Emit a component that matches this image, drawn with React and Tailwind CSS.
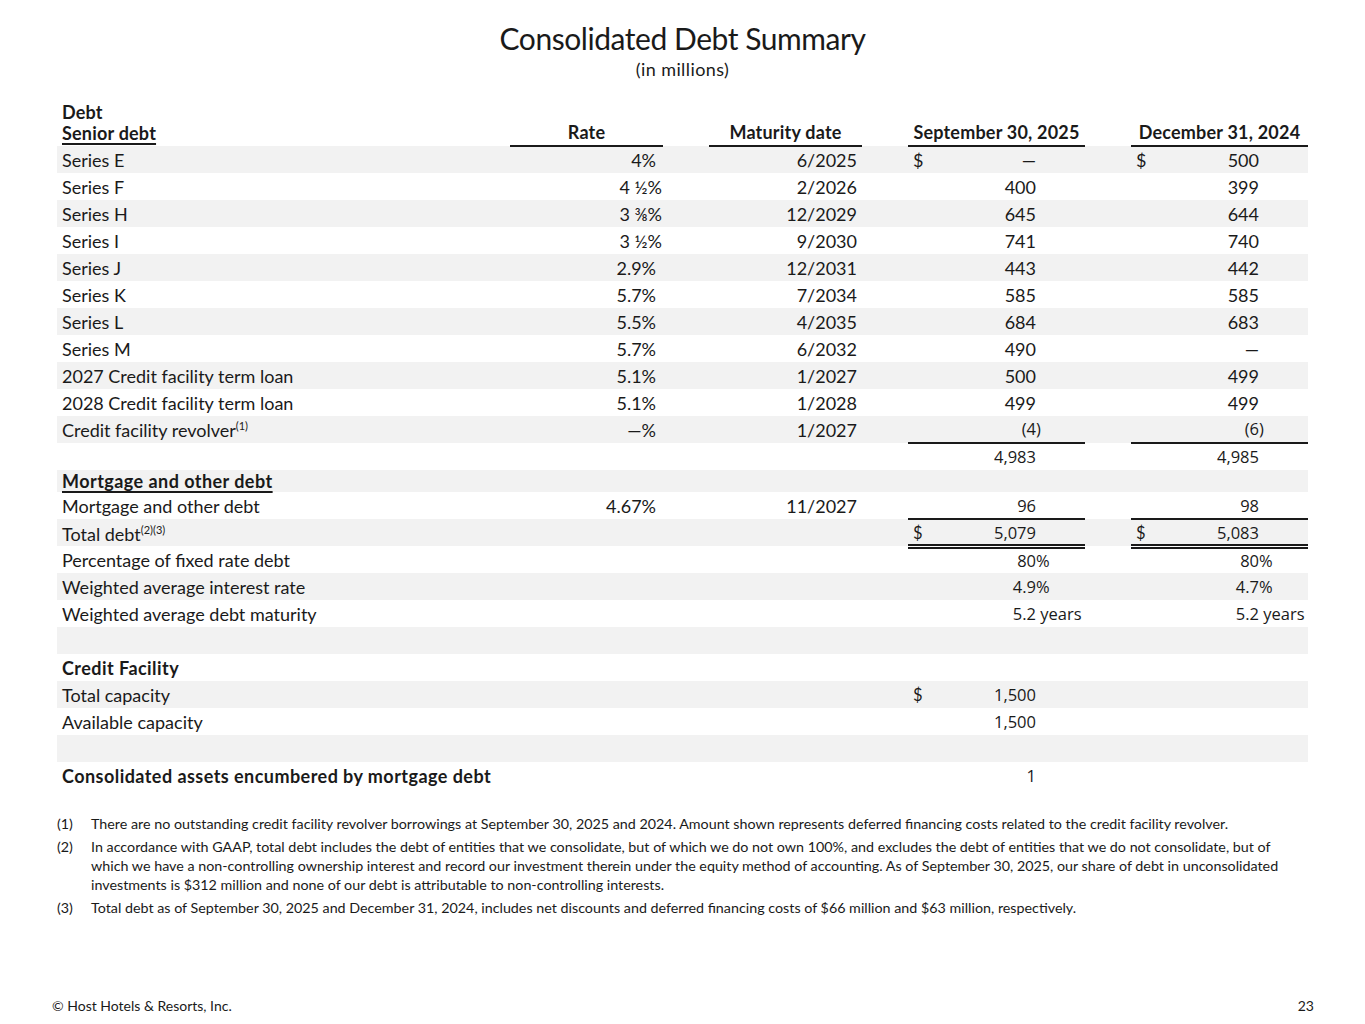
import React from "react";

const LATO = { fontFamily: "Lato, 'Noto Sans', sans-serif" };

function Num({ c, alt }) {
  if (!c) return null;
  return (
    <div
      className="flex items-baseline pl-[5px]"
      style={alt ? { fontFamily: "'Open Sans', 'Noto Sans', sans-serif", fontSize: "16.5px" } : undefined}
    >
      <span className="w-[12px] shrink-0 text-left" style={LATO}>{c.d ? "$" : ""}</span>
      <span className="flex-1 text-right">{c.v}</span>
      <span className="w-[49px] shrink-0 text-left whitespace-pre">{c.s || ""}</span>
    </div>
  );
}

const rows = [
  { label: "Series E", g: 1, rate: "4%", mat: "6/2025", sep: { d: 1, v: "—" }, dec: { d: 1, v: "500" } },
  { label: "Series F", rate: "4 ½%", frac: 1, mat: "2/2026", sep: { v: "400" }, dec: { v: "399" } },
  { label: "Series H", g: 1, rate: "3 ⅜%", frac: 1, mat: "12/2029", sep: { v: "645" }, dec: { v: "644" } },
  { label: "Series I", rate: "3 ½%", frac: 1, mat: "9/2030", sep: { v: "741" }, dec: { v: "740" } },
  { label: "Series J", g: 1, rate: "2.9%", mat: "12/2031", sep: { v: "443" }, dec: { v: "442" } },
  { label: "Series K", rate: "5.7%", mat: "7/2034", sep: { v: "585" }, dec: { v: "585" } },
  { label: "Series L", g: 1, rate: "5.5%", mat: "4/2035", sep: { v: "684" }, dec: { v: "683" } },
  { label: "Series M", rate: "5.7%", mat: "6/2032", sep: { v: "490" }, dec: { v: "—" } },
  { label: "2027 Credit facility term loan", g: 1, rate: "5.1%", mat: "1/2027", sep: { v: "500" }, dec: { v: "499" } },
  { label: "2028 Credit facility term loan", rate: "5.1%", mat: "1/2028", sep: { v: "499" }, dec: { v: "499" } },
  { label: "Credit facility revolver", sup: "(1)", g: 1, rate: "—%", mat: "1/2027", sep: { v: "(4", s: ")" }, dec: { v: "(6", s: ")" }, alt: 1, bb: 1 },
  { label: "", sep: { v: "4,983" }, dec: { v: "4,985" }, alt: 1 },
  { label: "Mortgage and other debt", bold: 1, ul: 1, g: 1, h: 22 },
  { label: "Mortgage and other debt", rate: "4.67%", mat: "11/2027", sep: { v: "96" }, dec: { v: "98" }, alt: 1, bb: 1, pt: "pt-[1px]" },
  { label: "Total debt", sup: "(2)(3)", g: 1, sep: { d: 1, v: "5,079" }, dec: { d: 1, v: "5,083" }, alt: 1, dbl: 1, pt: "pt-[3px] leading-[18px]" },
  { label: "Percentage of fixed rate debt", sep: { v: "80", s: "%" }, dec: { v: "80", s: "%" }, alt: 1 },
  { label: "Weighted average interest rate", g: 1, sep: { v: "4.9", s: "%" }, dec: { v: "4.7", s: "%" }, alt: 1 },
  { label: "Weighted average debt maturity", sep: { v: "5.2", s: " years" }, dec: { v: "5.2", s: " years" }, alt: 1 },
  { label: "", g: 1 },
  { label: "Credit Facility", bold: 1 },
  { label: "Total capacity", g: 1, sep: { d: 1, v: "1,500" }, alt: 1 },
  { label: "Available capacity", sep: { v: "1,500" }, alt: 1 },
  { label: "", g: 1 },
  { label: "Consolidated assets encumbered by mortgage debt", bold: 1, sep: { v: "1" }, alt: 1 },
];

export default function App() {
  return (
    <div
      className="w-[1365px] h-[1024px] bg-white text-[#1a1a1a] flex flex-col relative"
      style={LATO}
    >
      <div className="pt-[19px] text-center">
        <div className="text-[30px] leading-[38px] tracking-[-0.45px]">Consolidated Debt Summary</div>
        <div className="text-[18px] leading-[22px] mt-[1px] tracking-[0.4px]">(in millions)</div>
      </div>

      <div className="pl-[57px] mt-[22px]">
        <table className="table-fixed border-collapse w-[1251px] text-[18px]">
          <colgroup>
            <col className="w-[453px]" />
            <col className="w-[153px]" />
            <col className="w-[46px]" />
            <col className="w-[153px]" />
            <col className="w-[46px]" />
            <col className="w-[177px]" />
            <col className="w-[46px]" />
            <col className="w-[177px]" />
          </colgroup>
          <thead>
            <tr className="font-bold align-bottom tracking-[0.2px]">
              <td className="pl-[5px] leading-[21px] pb-[2px]">
                <div>Debt</div>
                <div className="underline underline-offset-[3px] decoration-[1.5px]">Senior debt</div>
              </td>
              <td className="text-center border-b-2 border-[#1a1a1a] leading-[21px] pb-[2px]">Rate</td>
              <td></td>
              <td className="text-center border-b-2 border-[#1a1a1a] leading-[21px] pb-[2px]">Maturity date</td>
              <td></td>
              <td className="text-center border-b-2 border-[#1a1a1a] leading-[21px] pb-[2px]">September 30, 2025</td>
              <td></td>
              <td className="text-center border-b-2 border-[#1a1a1a] leading-[21px] pb-[2px]">December 31, 2024</td>
            </tr>
          </thead>
          <tbody className="leading-[20px]">
            {rows.map((r, i) => {
              const h = r.h || 27;
              const numBorder = r.bb
                ? "border-b-2 border-[#1a1a1a]"
                : r.dbl
                ? "border-b-[5px] border-double border-[#1a1a1a]"
                : "";
              const pt = r.pt ? " " + r.pt : "";
              return (
                <tr key={i} className={r.g ? "bg-[#f2f2f2]" : ""} style={{ height: h }}>
                  <td className={"pl-[5px] p-0 whitespace-nowrap " + (r.bold ? "font-bold tracking-[0.45px]" : "") + pt}>
                    <span className={r.ul ? "underline underline-offset-[3px] decoration-[1.5px]" : ""}>{r.label}</span>
                    {r.sup && <sup className="text-[11px] relative top-[-7px]">{r.sup}</sup>}
                  </td>
                  <td className={"p-0 text-right whitespace-nowrap " + (r.frac ? "pr-[1px]" : "pr-[7px]") + pt}>{r.rate}</td>
                  <td className="p-0"></td>
                  <td className={"p-0 text-right pr-[5px]" + pt}>{r.mat}</td>
                  <td className="p-0"></td>
                  <td className={"p-0 " + numBorder + pt}><Num c={r.sep} alt={r.alt} /></td>
                  <td className="p-0"></td>
                  <td className={"p-0 " + (r.sep && r.dec ? numBorder : "") + pt}><Num c={r.dec} alt={r.alt} /></td>
                </tr>
              );
            })}
          </tbody>
        </table>
      </div>

      <div className="pl-[57px] mt-[25px] text-[14.3px] leading-[19px]">
        <div className="flex">
          <span className="w-[34px] shrink-0">(1)</span>
          <span className="whitespace-nowrap">There are no outstanding credit facility revolver borrowings at September 30, 2025 and 2024. Amount shown represents deferred financing costs related to the credit facility revolver.</span>
        </div>
        <div className="flex mt-[4px]">
          <span className="w-[34px] shrink-0">(2)</span>
          <div>
            <div className="whitespace-nowrap">In accordance with GAAP, total debt includes the debt of entities that we consolidate, but of which we do not own 100%, and excludes the debt of entities that we do not consolidate, but of</div>
            <div className="whitespace-nowrap">which we have a non-controlling ownership interest and record our investment therein under the equity method of accounting. As of September 30, 2025, our share of debt in unconsolidated</div>
            <div className="whitespace-nowrap">investments is $312 million and none of our debt is attributable to non-controlling interests.</div>
          </div>
        </div>
        <div className="flex mt-[4px]">
          <span className="w-[34px] shrink-0">(3)</span>
          <span className="whitespace-nowrap">Total debt as of September 30, 2025 and December 31, 2024, includes net discounts and deferred financing costs of $66 million and $63 million, respectively.</span>
        </div>
      </div>

      <div className="mt-auto flex justify-between pl-[52px] pr-[51px] pb-[9px] text-[14px] leading-[19px]">
        <span>© Host Hotels &amp; Resorts, Inc.</span>
        <span>23</span>
      </div>
    </div>
  );
}
